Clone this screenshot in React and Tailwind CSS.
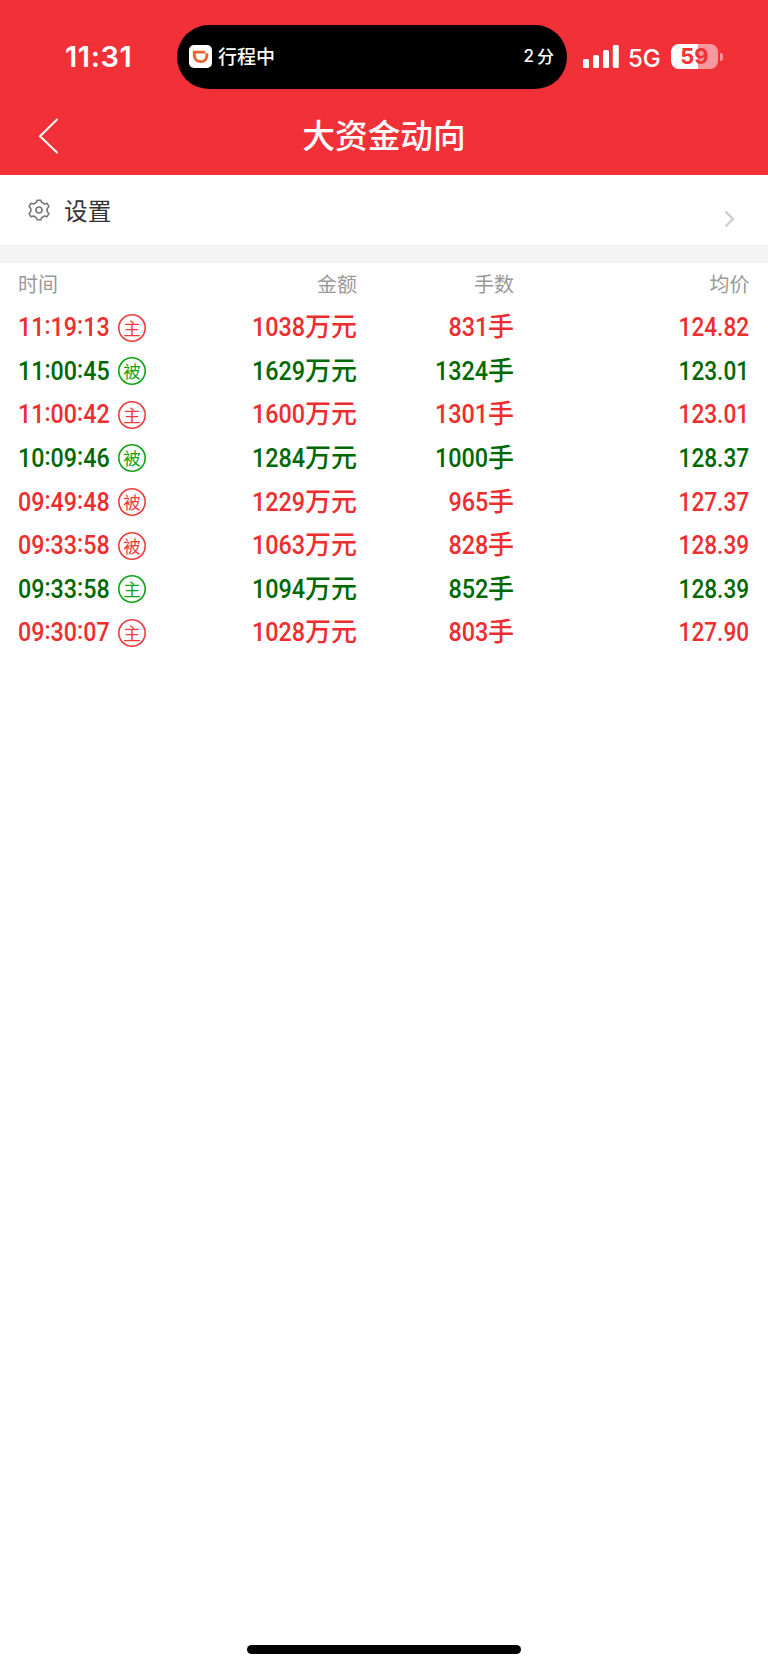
const trades = [
  { time: '11:19:13', side: '主', amount: '1038', lots: '831', price: '124.82', up: true },
  { time: '11:00:45', side: '被', amount: '1629', lots: '1324', price: '123.01', up: false },
  { time: '11:00:42', side: '主', amount: '1600', lots: '1301', price: '123.01', up: true },
  { time: '10:09:46', side: '被', amount: '1284', lots: '1000', price: '128.37', up: false },
  { time: '09:49:48', side: '被', amount: '1229', lots: '965', price: '127.37', up: true },
  { time: '09:33:58', side: '被', amount: '1063', lots: '828', price: '128.39', up: true },
  { time: '09:33:58', side: '主', amount: '1094', lots: '852', price: '128.39', up: false },
  { time: '09:30:07', side: '主', amount: '1028', lots: '803', price: '127.90', up: true },
]

const columns = 'grid grid-cols-[182px_157px_157px_235.500px]'

function StatusBar() {
  return (
    <div className="flex h-[114px] items-center text-white">
      <div className="ml-[65px] w-[112px] font-['Inter',sans-serif] text-[29px] font-semibold tracking-[0.6px]">
        11:31
      </div>
      <div className="mt-[-1px] flex h-16 w-[390px] items-center rounded-full bg-black pr-[13px] pl-3">
        <svg className="size-[23px]" viewBox="0 0 23 23">
          <rect width="23" height="23" rx="5" fill="#fff" />
          <path
            d="M5.3 7.1H17.9V10.2C17.9 14.2 15.4 16.6 11.8 16.6S5.3 14.2 5.3 10.2Z"
            fill="none"
            stroke="#e9632f"
            strokeWidth="2.9"
          />
          <path d="M16.2 4.800H20V8.300H16.200Z" fill="#fff" />
        </svg>
        <span className="mt-[-1px] ml-[6px] text-[19px] leading-6 font-medium">行程中</span>
        <span className="mt-[-1px] ml-auto flex items-center gap-[3px] text-[17px] leading-6 font-medium">
          <span className="font-['Inter',sans-serif] text-[17px]">2</span>分
        </span>
      </div>
      <svg className="mt-[-1px] ml-4 h-[23px] w-9" viewBox="0 0 36 23" fill="#fff">
        <rect x="0" y="14" width="6" height="9" rx="1.5" />
        <rect x="10" y="10" width="6" height="13" rx="1.5" />
        <rect x="20" y="5" width="6" height="18" rx="1.5" />
        <rect x="29.800" y="0" width="6" height="23" rx="1.5" />
      </svg>
      <span className="ml-[9px] w-[34px] pt-[3px] font-['Inter',sans-serif] text-[24px] font-medium tracking-[-0.2px]">
        5G
      </span>
      <div className="mt-[-1px] ml-[9px] flex items-center">
        <div className="flex h-[25px] w-[47px] items-center justify-center rounded-[8px] bg-linear-to-r from-white from-58% to-[#f9989c] to-58% font-['Inter',sans-serif] text-[22px] font-bold text-[#f23038]">
          59
        </div>
        <div className="ml-[2px] h-2 w-[3px] rounded-r-full bg-[#f9989c]" />
      </div>
    </div>
  )
}

function NavBar() {
  return (
    <div className="grid h-[61px] grid-cols-[1fr_auto_1fr] items-center text-white">
      <svg
        className="mt-[-17px] ml-[38px] h-9 w-5"
        viewBox="0 0 20 36"
        fill="none"
        stroke="currentColor"
        strokeWidth="2"
        strokeLinecap="round"
      >
        <path d="M19 1.500L2 18.300L19 34.500" />
      </svg>
      <h1 className="mt-[-21px] text-[32.700px] leading-10 font-medium">大资金动向</h1>
      <span />
    </div>
  )
}

function SettingsRow() {
  return (
    <button type="button" className="flex h-[70px] w-full items-center bg-white text-left">
      <svg
        className="ml-7 size-[22px]"
        viewBox="0 0 22 22"
        fill="none"
        stroke="#777"
        strokeWidth="1.6"
        strokeLinejoin="round"
      >
        <path d="M8.300 3.400L9.300 1.200H12.700L13.700 3.400L16.400 5L19.100 4.300L20.900 7.400L19.200 9.400V12.600L20.900 14.600L19.100 17.700L16.400 17L13.700 18.600L12.700 20.800H9.300L8.300 18.600L5.600 17L2.900 17.700L1.100 14.600L2.800 12.600V9.400L1.100 7.400L2.900 4.300L5.600 5Z" />
        <circle cx="11" cy="11" r="3" />
      </svg>
      <span className="mt-[2px] ml-[14px] text-[23.700px] text-[#333]">设置</span>
      <svg
        className="mt-[18px] mr-[33px] ml-auto h-[18px] w-[11px]"
        viewBox="0 0 11 18"
        fill="none"
        stroke="#ccc"
        strokeWidth="2.3"
      >
        <path d="M1.500 1.500L9 9L1.500 16.500" />
      </svg>
    </button>
  )
}

// Narrow figures, squeezed towards whichever side they are anchored to
function Figures({ children, className = 'origin-right scale-x-[.9]' }) {
  return (
    <span className={`inline-block font-['Roboto',sans-serif] font-medium ${className}`}>
      {children}
    </span>
  )
}

function Time({ value }) {
  const [h, m, s] = value.split(':')
  const colon = <span className="relative bottom-[2px]">:</span>
  return (
    <Figures className="origin-left scale-x-[.895]">
      {h}
      {colon}
      {m}
      {colon}
      {s}
    </Figures>
  )
}

function SideBadge({ side, up }) {
  return (
    <svg
      className={`mt-[3px] size-7 shrink-0 ${up ? 'text-[#ee3b3d]' : 'text-[#0fa318]'}`}
      viewBox="0 0 28 28"
    >
      <circle cx="14" cy="14" r="13.200" fill="none" stroke="currentColor" strokeWidth="1.600" />
      <text x="14" y="20.500" textAnchor="middle" fill="currentColor" fontSize="17.500" fontWeight="400">
        {side}
      </text>
    </svg>
  )
}

function TradeRow({ trade }) {
  return (
    <div
      className={`${columns} h-[43.620px] items-center text-right text-[26px] leading-[43px] font-medium ${trade.up ? 'text-[#ee2d2f]' : 'text-[#006800]'}`}
    >
      <div className="flex items-center text-left">
        <span className="w-[100px]">
          <Time value={trade.time} />
        </span>
        <SideBadge side={trade.side} up={trade.up} />
      </div>
      <div>
        <Figures>{trade.amount}</Figures>万元
      </div>
      <div>
        <Figures>{trade.lots}</Figures>手
      </div>
      <div>
        <Figures className="origin-right scale-x-[.87]">{trade.price}</Figures>
      </div>
    </div>
  )
}

export default function App() {
  return (
    <div className="flex h-[1669px] w-[768px] flex-col bg-white font-['Noto_Sans_CJK_SC',sans-serif]">
      <header className="bg-[#f23038]">
        <StatusBar />
        <NavBar />
      </header>
      <SettingsRow />
      <div className="h-[17.500px] shrink-0 bg-[#f4f4f4]" />
      <main className="pl-[18px]">
        <div className={`${columns} h-[40.600px] items-center pt-[2px] text-right text-[20px] text-[#999]`}>
          <span className="text-left">时间</span>
          <span>金额</span>
          <span>手数</span>
          <span>均价</span>
        </div>
        {trades.map((trade, i) => (
          <TradeRow key={i} trade={trade} />
        ))}
      </main>
      <div className="mx-auto mt-auto mb-[15px] h-[9px] w-[274px] rounded-full bg-black" />
    </div>
  )
}
